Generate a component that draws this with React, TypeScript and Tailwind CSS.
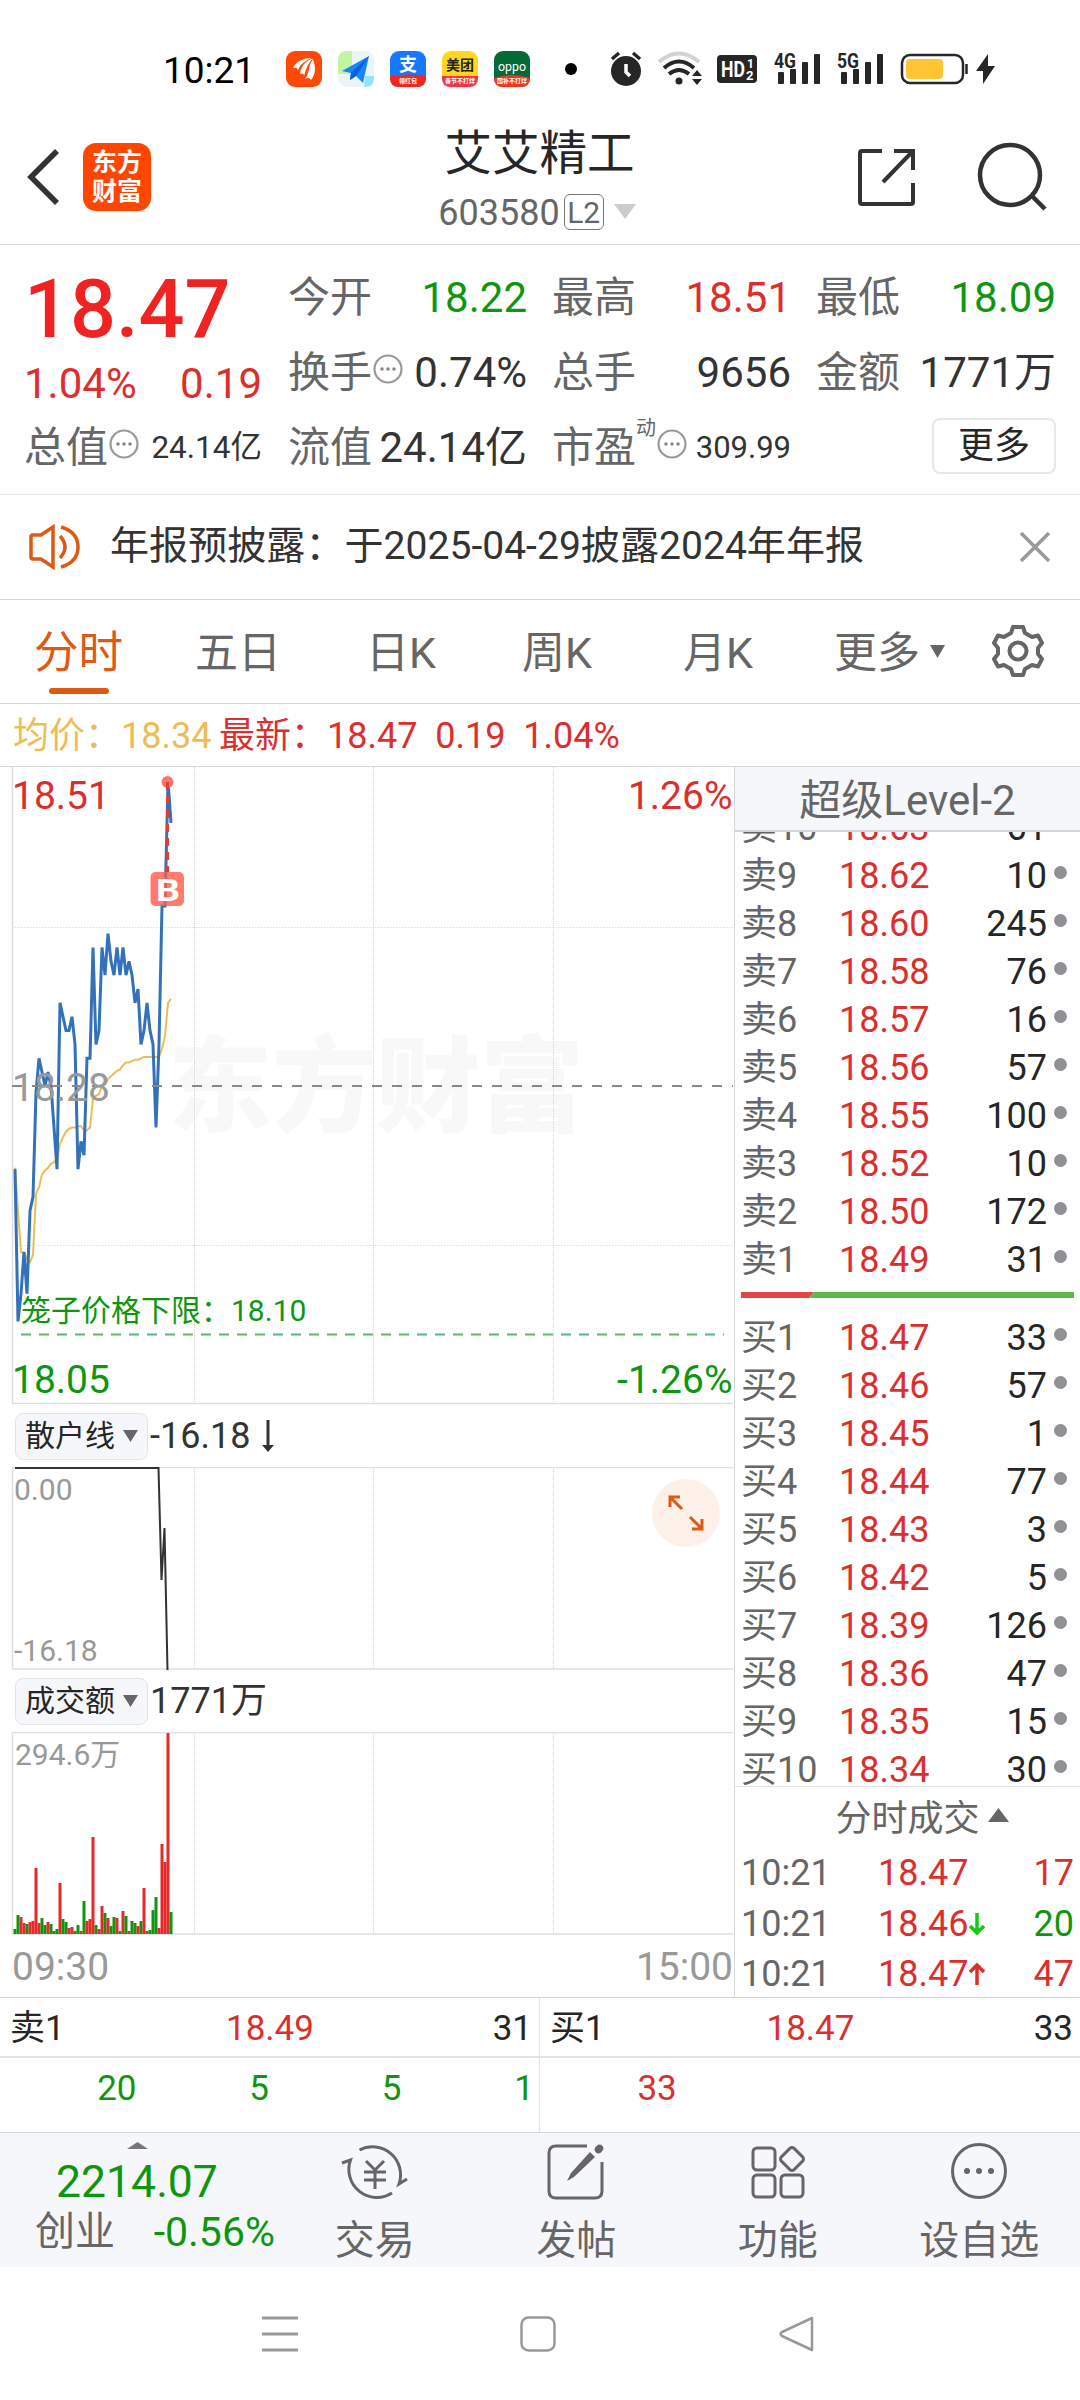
import type { ReactNode } from "react"

type Level = { label: string; price: string; qty: number }

// minute bars: [height in px, direction]
type VolumeBar = [number, "r" | "g"]

const sells: Level[] = [
  { label: "卖10", price: "18.63", qty: 61 },
  { label: "卖9", price: "18.62", qty: 10 },
  { label: "卖8", price: "18.60", qty: 245 },
  { label: "卖7", price: "18.58", qty: 76 },
  { label: "卖6", price: "18.57", qty: 16 },
  { label: "卖5", price: "18.56", qty: 57 },
  { label: "卖4", price: "18.55", qty: 100 },
  { label: "卖3", price: "18.52", qty: 10 },
  { label: "卖2", price: "18.50", qty: 172 },
  { label: "卖1", price: "18.49", qty: 31 },
]

const buys: Level[] = [
  { label: "买1", price: "18.47", qty: 33 },
  { label: "买2", price: "18.46", qty: 57 },
  { label: "买3", price: "18.45", qty: 1 },
  { label: "买4", price: "18.44", qty: 77 },
  { label: "买5", price: "18.43", qty: 3 },
  { label: "买6", price: "18.42", qty: 5 },
  { label: "买7", price: "18.39", qty: 126 },
  { label: "买8", price: "18.36", qty: 47 },
  { label: "买9", price: "18.35", qty: 15 },
  { label: "买10", price: "18.34", qty: 30 },
]

const trades = [
  { time: "10:21", price: "18.47", dir: "", qty: 17, color: "text-[#dc2f2d]" },
  { time: "10:21", price: "18.46", dir: "down", qty: 20, color: "text-[#0f960f]" },
  { time: "10:21", price: "18.47", dir: "up", qty: 47, color: "text-[#dc2f2d]" },
]

// offsets from 18.28, in cents, one per minute
const prices = [
  -6, -17, -15, -12, -15, -9, -8, -0.5, 2, 1, 0, 1, 0, -3, -6, 6, 5, 4, 4, 5, 3,
  -6, -4, -5, 2, 2, 10, 3, 4, 10, 8, 11, 9, 8, 10, 8, 10, 8, 9, 8, 6, 7, 3, 4,
  6, 4, 3, -3, 3, 13, 13, 22, 19,
]

const averages = [
  -5.9, -9, -12, -12, -12.5, -12.7, -12.2, -7.8, -7.3, -6.4, -6.1, -5.9, -5.6,
  -5.5, -5.3, -4.2, -3.7, -3.3, -3.1, -3, -3, -2.9, -2.9, -3.2, -3.2, -3, -0.9,
  -0.7, -0.6, 0, 0.1, 0.5, 0.7, 0.9, 1.1, 1.2, 1.5, 1.7, 1.7, 1.8, 1.9, 1.9, 2,
  2.1, 2.1, 2.1, 2.1, 2.1, 2.1, 2.7, 3.6, 6, 6.3,
]

const volumes: VolumeBar[] = [
  [5, "g"], [19, "g"], [17, "r"], [11, "r"], [10, "g"], [12, "r"], [13, "r"],
  [66, "r"], [11, "r"], [16, "g"], [9, "g"], [12, "r"], [10, "g"], [3, "g"],
  [5, "g"], [51, "r"], [15, "g"], [12, "g"], [6, "r"], [7, "r"], [3, "g"],
  [9, "g"], [3, "r"], [33, "g"], [13, "r"], [15, "r"], [97, "r"], [9, "g"],
  [5, "r"], [28, "r"], [21, "g"], [16, "r"], [8, "g"], [17, "g"], [16, "r"],
  [3, "g"], [23, "r"], [18, "g"], [3, "r"], [13, "g"], [11, "g"], [8, "r"],
  [13, "g"], [46, "r"], [3, "r"], [4, "g"], [24, "g"], [37, "g"], [6, "r"],
  [90, "r"], [72, "r"], [201, "r"], [22, "g"],
]

const toPoints = (data: number[]) =>
  data.map((v, i) => `${15 + i * 3},${319 - v * 13.85}`).join(" ")

function StatusBar() {
  return (
    <div className="flex h-[90px] items-end pl-[163px]">
      <div className="flex h-[42px] items-center">
        <span className="w-[123px] pt-[3px] text-[37px] leading-none text-black">10:21</span>

        {/* app notifications */}
        <div className="flex gap-4">
          <svg width="36" height="36" viewBox="0 0 36 36">
            <rect width="36" height="36" rx="9" fill="#fe4a06" />
            <path d="M7 17C10 10 18 7 26 7Q20 9 17 12Q13 15 12 20C12 17 10 16 7 17Z" fill="#fff" />
            <path d="M14 23C15 15 20 9 27 7.500C22 12 20 18 18 25C18 22 16 22 14 23Z" fill="#fff" />
            <path d="M19 28C24 22 22 14 27 8.500C30 16 30 23 25 29C24 27 22 26 19 28Z" fill="#fff" />
          </svg>
          <svg width="36" height="36" viewBox="0 0 36 36">
            <rect width="36" height="36" rx="9" fill="#eef3f8" />
            <path d="M9 0H14V23H0V9Q0 0 9 0Z" fill="#c2f5a0" />
            <path d="M27 25H36V27Q36 36 27 36H26Z" fill="#8be6ff" />
            <path d="M4 20L31 5L25 32L18 25L12 29L13 22Z" fill="#1785fb" />
            <path d="M31 5L13 22L12 29L18 25Z" fill="#0861d8" />
          </svg>
          <svg width="36" height="36" viewBox="0 0 36 36">
            <rect width="36" height="36" rx="9" fill="#1677ff" />
            <path d="M0 25Q18 22 36 25V27Q36 36 27 36H9Q0 36 0 27Z" fill="#f2271c" />
            <text x="18" y="20" textAnchor="middle" fontSize="18" fontWeight="700" fill="#fff">支</text>
            <text x="18" y="32" textAnchor="middle" fontSize="6" fontWeight="700" fill="#fff">领红包</text>
          </svg>
          <svg width="36" height="36" viewBox="0 0 36 36">
            <rect width="36" height="36" rx="9" fill="#ffd71b" />
            <path d="M0 25H36V27Q36 36 27 36H9Q0 36 0 27Z" fill="#f2334a" />
            <text x="18" y="19" textAnchor="middle" fontSize="14" fontWeight="700" fill="#222">美团</text>
            <text x="18" y="32" textAnchor="middle" fontSize="6" fontWeight="700" fill="#fff">春节不打烊</text>
          </svg>
          <svg width="36" height="36" viewBox="0 0 36 36">
            <rect width="36" height="36" rx="9" fill="#046a38" />
            <path d="M0 27Q18 21 36 27Q36 36 27 36H9Q0 36 0 27Z" fill="#f0351d" />
            <text x="18" y="20" textAnchor="middle" fontSize="12" textLength="28" lengthAdjust="spacingAndGlyphs" fill="#fff">oppo</text>
            <text x="18" y="32" textAnchor="middle" fontSize="6" fontWeight="700" fill="#fff">国补不打烊</text>
          </svg>
        </div>
        <span className="ml-[35px] h-3 w-3 rounded-full bg-black" />

        {/* alarm, wifi, HD */}
        <svg className="ml-[32px]" width="34" height="36" viewBox="0 0 34 36" fill="#262626">
          <circle cx="17" cy="20" r="15" />
          <path d="M3 8L10 2M31 8L24 2" stroke="#262626" strokeWidth="3.5" />
          <path d="M17 13V21L21 25" stroke="#fff" strokeWidth="3.5" fill="none" />
        </svg>
        <svg className="ml-[14px]" width="46" height="36" viewBox="0 0 46 36" fill="none" strokeWidth="4">
          <path d="M2 11Q22 -6 42 11" stroke="#d2d2d2" />
          <path d="M7 17Q22 4 37 17" stroke="#262626" />
          <path d="M12 23Q22 15 32 23" stroke="#262626" />
          <circle cx="22" cy="30" r="3.500" fill="#262626" />
          <path d="M35 25L40 19L45 25ZM35 28L40 34L45 28Z" fill="#262626" />
        </svg>
        <svg className="ml-[14px]" width="40" height="28" viewBox="0 0 40 28">
          <rect width="40" height="28" rx="4" fill="#262626" />
          <text x="4" y="22" fontSize="22" fontWeight="700" textLength="24" lengthAdjust="spacingAndGlyphs" fill="#fff">HD</text>
          <text x="30" y="13" fontSize="12" fontWeight="700" fill="#fff">1</text>
          <text x="29" y="25" fontSize="13" fontWeight="700" fill="#fff">2</text>
        </svg>
        {["4G", "5G"].map((net) => (
          <svg key={net} className="ml-[17px]" width="46" height="34" viewBox="0 0 46 34" fill="#262626">
            <text x="0" y="16" fontSize="21" fontWeight="700" textLength="22" lengthAdjust="spacingAndGlyphs">{net}</text>
            <rect x="4" y="20" width="6" height="12" rx="1" />
            <rect x="16" y="17" width="6" height="15" rx="1" />
            <rect x="28" y="10" width="6" height="22" rx="1" />
            <rect x="40" y="2" width="6" height="30" rx="1" />
          </svg>
        ))}
        <svg className="ml-[17px]" width="96" height="34" viewBox="0 0 96 34">
          <rect x="2" y="3" width="61" height="28" rx="8" fill="none" stroke="#262626" strokeWidth="2.5" />
          <rect x="6" y="7" width="37" height="20" rx="4" fill="#ffc533" />
          <path d="M66.500 12V22" stroke="#262626" strokeWidth="2.5" />
          <path d="M88 2L76 19H83V32L95 14H88Z" fill="#262626" />
        </svg>
      </div>
    </div>
  )
}

function Header() {
  return (
    <div className="flex h-[155px] items-center border-b border-[#d6d6d6]">
      <svg className="mt-5 ml-[26px]" width="36" height="58" viewBox="0 0 36 58" fill="none" stroke="#333" strokeWidth="5.5">
        <path d="M31 3L5 29L31 55" />
      </svg>
      <div className="mt-5 ml-[21px] flex h-[68px] w-[68px] flex-col items-center justify-center rounded-[13px] bg-[#ff4600] text-[25px] leading-[29px] font-bold text-white">
        <span>东方</span>
        <span>财富</span>
      </div>
      <div className="flex flex-1 flex-col items-center pt-[26px] pl-[72px]">
        <h1 className="h-[60px] text-[47.500px] leading-[60px] text-[#262626]">艾艾精工</h1>
        <div className="-ml-[5px] flex h-[52px] items-center pt-1">
          <span className="pt-[2px] text-[36px] leading-none text-[#666]">603580</span>
          <span className="ml-[4px] flex h-9 w-10 items-center justify-center rounded-md border-[1.5px] border-[#777] pt-[2px] text-[30px] leading-none text-[#666]">L2</span>
          <svg className="ml-[10px]" width="22" height="16"><path d="M0 0H22L11 15Z" fill="#ccc" /></svg>
        </div>
      </div>
      <svg className="mt-5 mr-[60px]" width="61" height="61" viewBox="0 0 61 61" fill="none" stroke="#333" strokeWidth="4">
        <path d="M26 4H6Q4 4 4 6V55Q4 57 6 57H55Q57 57 57 55V36M38 4H57V23M57 4L27 35" />
      </svg>
      <svg className="mt-5 mr-[32px]" width="71" height="71" viewBox="0 0 71 71" fill="none" stroke="#333" strokeWidth="4.5">
        <circle cx="33" cy="33" r="30" />
        <path d="M55 54L68 67" />
      </svg>
    </div>
  )
}

function MoreDots() {
  return (
    <svg className="-mt-2 ml-px shrink-0" width="30" height="30" viewBox="0 0 30 30">
      <circle cx="15" cy="15" r="13.500" fill="none" stroke="#999" strokeWidth="2.2" />
      <circle cx="9" cy="15" r="1.800" fill="#888" />
      <circle cx="15" cy="15" r="1.800" fill="#888" />
      <circle cx="21" cy="15" r="1.800" fill="#888" />
    </svg>
  )
}

function Stat({ label, children, className }: { label: string; children?: ReactNode; className: string }) {
  return (
    <div className="flex h-[75px] items-center justify-between">
      <span className="text-[42px] text-[#666]">{label}</span>
      <span className={className}>{children}</span>
    </div>
  )
}

function Quote() {
  return (
    <div className="flex h-[250px] border-b border-[#e4e4e4] pt-[15px] pl-[24px] leading-none">
      <div className="w-[238px]">
        <div className="h-[94px] text-[81px] leading-[99px] font-medium text-[#f02322]">
          <span>18.47</span>
        </div>
        <div className="flex h-[57px] items-center justify-between pt-[2px] text-[42px] text-[#dc2f2d]">
          <span>1.04%</span>
          <span>0.19</span>
        </div>
        <div className="flex h-[73px] items-center">
          <span className="text-[42px] text-[#666]">总值</span>
          <MoreDots />
          <span className="ml-auto text-[31.500px] text-[#333]">24.14亿</span>
        </div>
      </div>
      <div className="ml-[26px] w-[239px]">
        <Stat label="今开" className="text-[42px] text-[#0f960f]">18.22</Stat>
        <div className="flex h-[75px] items-center">
          <span className="text-[42px] text-[#666]">换手</span>
          <MoreDots />
          <span className="ml-auto text-[42px] text-[#333]">0.74%</span>
        </div>
        <Stat label="流值" className="text-[42px] text-[#333]">24.14亿</Stat>
      </div>
      <div className="ml-[25px] w-[239px]">
        <Stat label="最高" className="text-[42px] text-[#dc2f2d]">18.51</Stat>
        <Stat label="总手" className="text-[42px] text-[#333]">9656</Stat>
        <div className="flex h-[75px] items-center">
          <span className="text-[42px] text-[#666]">市盈</span>
          <span className="-mt-10 text-[20px] text-[#666]">动</span>
          <MoreDots />
          <span className="ml-auto text-[31px] text-[#333]">309.99</span>
        </div>
      </div>
      <div className="ml-[25px] w-[240px]">
        <Stat label="最低" className="text-[42px] text-[#0f960f]">18.09</Stat>
        <Stat label="金额" className="text-[42px] text-[#333]">1771万</Stat>
        <div className="flex h-[71px] items-center justify-end">
          <button className="h-14 w-[124px] rounded-lg border-2 border-[#e8e8e8] text-[36px] leading-none text-[#262626]">更多</button>
        </div>
      </div>
    </div>
  )
}

function Notice() {
  return (
    <div className="flex h-[105px] items-center border-b border-[#d6d6d6] pl-[29px]">
      <svg width="53" height="46" viewBox="0 0 53 46" fill="none" stroke="#dc5a14" strokeWidth="3.5">
        <path d="M2 13Q2 11 4 11H12L24 3V43L12 35H4Q2 35 2 33Z" />
        <path d="M31 12Q41 23 31 34M32 3Q49 8 49 23Q49 38 32 43" />
      </svg>
      <span className="ml-[28px] text-[39.100px] leading-none text-[#333]">年报预披露：于2025-04-29披露2024年年报</span>
      <svg className="mr-[29px] ml-auto" width="32" height="32" viewBox="0 0 32 32" stroke="#999" strokeWidth="3.500">
        <path d="M2 2L30 30M30 2L2 30" />
      </svg>
    </div>
  )
}

function Tabs() {
  return (
    <div className="flex h-[104px] items-center border-b border-[#d6d6d6] pt-1 text-[43px] leading-none text-[#666]">
      <div className="relative ml-[34px] w-[161px] text-[44.500px] text-[#dc5a14]">
        <span>分时</span>
        <div className="absolute top-[57px] left-[15px] h-[6px] w-[60px] rounded-full bg-[#dc5a14]" />
      </div>
      <div className="w-[171px]">五日</div>
      <div className="w-[156px]">日K</div>
      <div className="w-[161px]">周K</div>
      <div className="w-[151px]">月K</div>
      <div className="flex w-[157px] items-center">
        更多
        <svg className="-mt-1 ml-[10px]" width="15" height="13"><path d="M0 0H15L7.500 13Z" fill="#666" /></svg>
      </div>
      <svg className="-mt-[6px]" width="54" height="54" viewBox="0 0 54 54" fill="none" stroke="#666" strokeWidth="4" strokeLinejoin="round">
        <path d="M22 3H32L34 9L41 13L47 11.500L51 19L47 24V30L51 35L47 42.500L41 41L34 45L32 51H22L20 45L13 41L7 42.500L3 35L7 30V24L3 19L7 11.500L13 13L20 9Z" />
        <circle cx="27" cy="27" r="8.500" />
      </svg>
    </div>
  )
}

function GridLines({ height }: { height: number }) {
  return (
    <g>
      {[194.5, 373.5, 553.5].map((x) => (
        <path key={x} d={`M${x} 0V${height}`} stroke="#d2d2d2" strokeWidth="1" strokeDasharray="1 1" />
      ))}
      <path d={`M12.500 0V${height}`} stroke="#dedede" strokeWidth="1.5" />
    </g>
  )
}

function PriceChart() {
  return (
    <svg className="block" width="734" height="638" viewBox="0 0 734 638">
      <text x="168" y="357" fontSize="104" fontWeight="900" fill="#f8f8f8" textLength="416">东方财富</text>
      <GridLines height={636} />
      <path d="M12 160.500H733M12 478.500H733" stroke="#dcdcdc" strokeDasharray="1.500 1.500" />
      <path d="M12 636.500H733" stroke="#dedede" strokeWidth="1.5" />
      <polyline points={toPoints(averages)} fill="none" stroke="#edbd55" strokeWidth="2" />
      <polyline points={toPoints(prices)} fill="none" stroke="#3372b9" strokeWidth="3" />
      <path d="M12 319H733" stroke="#888" strokeWidth="2" strokeDasharray="10 10" />
      <path d="M21 567.500H724" stroke="#5fb865" strokeWidth="1.800" strokeDasharray="10 8" />

      {/* buy marker */}
      <circle cx="167.500" cy="15" r="6" fill="#f9766b" />
      <path d="M167.500 15V105" stroke="#dc3f38" strokeWidth="3" strokeDasharray="8 6" />
      <rect x="150.500" y="105" width="33.500" height="34" rx="5" fill="#ff5a4a" fillOpacity="0.8" />
      <text x="156" y="133.500" fontSize="32" fontWeight="700" textLength="24" lengthAdjust="spacingAndGlyphs" fill="#fff">B</text>

      <text x="12" y="42" fontSize="39" fill="#dc2f2d">18.51</text>
      <text x="732.500" y="42" fontSize="39" textAnchor="end" fill="#dc2f2d">1.26%</text>
      <text x="12" y="333.500" fontSize="39" fill="#999">18.28</text>
      <text x="21" y="554" fontSize="30" fill="#0f960f">笼子价格下限：18.10</text>
      <text x="12" y="626" fontSize="39" fill="#0f960f">18.05</text>
      <text x="732.500" y="626" fontSize="39" textAnchor="end" fill="#0f960f">-1.26%</text>
    </svg>
  )
}

function IndicatorRow({ name, children }: { name: string; children: ReactNode }) {
  return (
    <div className="flex h-[62px] items-center pl-[15px] leading-none">
      <div className="flex h-[47px] w-[133px] items-center rounded-lg border border-[#e3e5e9] bg-[#f6f7fa] pl-[9px] text-[30px] text-[#262626]">
        {name}
        <svg className="ml-2" width="15" height="12"><path d="M0 0H15L7.500 12Z" fill="#666" /></svg>
      </div>
      <div className="ml-[2px] flex items-center text-[36px] text-[#333]">{children}</div>
    </div>
  )
}

function Charts() {
  return (
    <div className="relative w-[734px]">
      <PriceChart />
      <IndicatorRow name="散户线">
        -16.18
        <svg className="ml-[12px]" width="12" height="32" viewBox="0 0 12 32">
          <path d="M6 0V27" stroke="#333" strokeWidth="3" />
          <path d="M0 25H12L6 32Z" fill="#333" />
        </svg>
      </IndicatorRow>
      <svg className="block" width="734" height="203" viewBox="0 0 734 203">
        <GridLines height={202} />
        <path d="M12 0.500H733M12 202H733" stroke="#dedede" strokeWidth="1.5" />
        <path d="M15 1H158.500L161.500 113L164.500 61L167.500 203" fill="none" stroke="#333" strokeWidth="2" />
        <text x="14" y="33" fontSize="30" fill="#999">0.00</text>
        <text x="14" y="194" fontSize="30" fill="#999">-16.18</text>
      </svg>
      <div className="absolute top-[712px] left-[652px] flex h-[68px] w-[68px] items-center justify-center rounded-full bg-[#fdf0e8]">
        <svg width="36" height="36" viewBox="0 0 36 36" fill="none" stroke="#dc5a14" strokeWidth="3">
          <path d="M2 12V2H12M2 2L14 14M24 34H34V24M34 34L22 22" />
        </svg>
      </div>
      <IndicatorRow name="成交额">1771万</IndicatorRow>
      <svg className="block" width="734" height="203" viewBox="0 0 734 203">
        <GridLines height={202} />
        <path d="M12 0.500H733M12 202H733" stroke="#dedede" strokeWidth="1.5" />
        <text x="15" y="33" fontSize="30" fill="#999">294.6万</text>
        {volumes.map(([h, dir], i) => (
          <rect key={i} x={13.5 + i * 3} y={202 - h} width="3" height={h} fill={dir === "r" ? "#e62a29" : "#0f960f"} />
        ))}
      </svg>
      <div className="flex h-[62px] items-center justify-between pt-[3px] pr-px pl-[12px] text-[39px] leading-none text-[#999]">
        <span>09:30</span>
        <span>15:00</span>
      </div>
    </div>
  )
}

function LevelRow({ level }: { level: Level }) {
  return (
    <div className="flex h-12 items-center pl-[6px] text-[36px] leading-none">
      <span className="w-[98px] text-[#666]">{level.label}</span>
      <span className="w-[120px] text-[#dc2f2d]">{level.price}</span>
      <span className="w-[88px] text-right text-[#262626]">{level.qty}</span>
      <span className="-mt-2 ml-[7px] h-[13px] w-[13px] rounded-full bg-[#909095]" />
    </div>
  )
}

function OrderBook() {
  return (
    <div className="w-[346px] border-l border-[#d6d8dc]">
      <div className="flex h-[65px] items-center justify-center border-b-2 border-[#d2d5da] bg-[#f6f7fa] pt-[5px] text-[42px] leading-none text-[#666]">
        超级Level-2
      </div>

      {/* list is scrolled, so the first row is cut by the header */}
      <div className="flex h-[955px] flex-col overflow-hidden border-b border-[#e4e4e4]">
        <div className="-mt-[28px] shrink-0">
          {sells.map((l) => (
            <LevelRow key={l.label} level={l} />
          ))}
        </div>
        <div className="flex h-[30px] shrink-0 items-start pt-[8px] pl-[6px]">
          <svg width="333" height="6">
            <path d="M0 0H73L68 6H0Z" fill="#e64545" />
            <path d="M73 0H333V6H68Z" fill="#5cb84a" />
          </svg>
        </div>
        <div className="shrink-0">
          {buys.map((l) => (
            <LevelRow key={l.label} level={l} />
          ))}
        </div>
      </div>

      <div className="flex h-[61px] items-center justify-center pt-[2px] pl-[29px] text-[36px] leading-none text-[#666]">
        分时成交
        <svg className="-mt-2 ml-[8px]" width="21" height="14"><path d="M0 14L10.500 0L21 14Z" fill="#666" /></svg>
      </div>
      {trades.map((t, i) => (
        <div key={i} className="flex h-[50.500px] items-center pr-[6px] pl-[6px] text-[36px] leading-none">
          <span className="w-[137px] text-[#666]">{t.time}</span>
          <span className="text-[#dc2f2d]">{t.price}</span>
          {t.dir === "down" && (
            <svg width="18" height="24" viewBox="0 0 18 24" fill="none" stroke="#12cc12" strokeWidth="3.500">
              <path d="M9 1V21M2 14L9 21L16 14" />
            </svg>
          )}
          {t.dir === "up" && (
            <svg width="18" height="24" viewBox="0 0 18 24" fill="none" stroke="#dc2f2d" strokeWidth="3.500">
              <path d="M9 23V3M2 10L9 3L16 10" />
            </svg>
          )}
          <span className={`ml-auto ${t.color}`}>{t.qty}</span>
        </div>
      ))}
    </div>
  )
}

function BestQuote({ label, price, qty }: { label: string; price: string; qty: number }) {
  return (
    <div className="flex h-[60px] items-center justify-between border-b-2 border-[#e0e2e4] pt-[3px] pr-[7px] pl-[10px]">
      <span className="w-[110px] text-[#262626]">{label}</span>
      <span className="text-[#dc2f2d]">{price}</span>
      <span className="w-[112px] text-right text-[#262626]">{qty}</span>
    </div>
  )
}

function QueueStrip() {
  return (
    <div className="flex h-[136px] border-y border-[#d2d5da] text-[35px] leading-none">
      <div className="w-[540px] border-r border-[#dfe1e4]">
        <BestQuote label="卖1" price="18.49" qty={31} />
        <div className="grid h-[61px] grid-cols-4 items-center pr-[5px] pl-[4px] text-right text-[#0f960f]">
          <span>20</span>
          <span>5</span>
          <span>5</span>
          <span>1</span>
        </div>
      </div>
      <div className="w-[540px]">
        <BestQuote label="买1" price="18.47" qty={33} />
        <div className="grid h-[61px] grid-cols-4 items-center pr-[5px] pl-[4px] text-right text-[#dc2f2d]">
          <span>33</span>
        </div>
      </div>
    </div>
  )
}

function NavItem({ label, children }: { label: string; children: ReactNode }) {
  return (
    <div className="flex flex-1 flex-col items-center pt-[5px]">
      <svg width="68" height="68" viewBox="0 0 68 68" fill="none" stroke="#666" strokeWidth="3">
        {children}
      </svg>
      <span className="mt-[15px] text-[40px] leading-none text-[#666]">{label}</span>
    </div>
  )
}

function BottomBar() {
  return (
    <div className="flex h-[134px] bg-[#f6f7fa]">
      <div className="flex w-[274px] flex-col items-center pt-[9px] leading-none text-[#0f960f]">
        <svg width="21" height="7"><path d="M0 7L10.500 0L21 7Z" fill="#777" /></svg>
        <span className="mt-[11px] text-[44.500px]">2214.07</span>
        <div className="mt-[7px] flex w-[240px] items-center justify-between">
          <span className="ml-[18px] text-[40px] text-[#666]">创业</span>
          <span className="-mr-[18px] text-[41px]">-0.56%</span>
        </div>
      </div>
      <NavItem label="交易">
        <path d="M18.500 12A28 28 0 0 1 58 46L66 41M51 55A28 28 0 0 1 9.500 22L1 25" />
        <path d="M25 23L34 32L43 23M34 32V51M23 34H45M23 42H45" />
      </NavItem>
      <NavItem label="发帖">
        <path d="M45 8H14Q7 8 7 15V53Q7 60 14 60H53Q60 60 60 53V24" />
        <path d="M56.500 11.500L57.500 10.500" strokeWidth="7.500" strokeLinecap="round" />
        <path d="M48 14L53 19L32 39L25 43L29 35Z" fill="#666" stroke="none" />
      </NavItem>
      <NavItem label="功能">
        <rect x="9" y="10" width="22" height="22" rx="4" />
        <rect x="9" y="37" width="22" height="22" rx="4" />
        <rect x="37" y="37" width="22" height="22" rx="4" />
        <rect x="39" y="12" width="18" height="18" rx="3" transform="rotate(45 48 21)" />
      </NavItem>
      <NavItem label="设自选">
        <circle cx="34" cy="33" r="26.500" />
        <g fill="#666" stroke="none">
          <circle cx="22" cy="33" r="3" />
          <circle cx="34" cy="33" r="3" />
          <circle cx="46" cy="33" r="3" />
        </g>
      </NavItem>
    </div>
  )
}

function SystemNav() {
  return (
    <div className="flex h-[133px] items-center pl-[262px]">
      <svg width="36" height="36" viewBox="0 0 36 36" stroke="#999" strokeWidth="3">
        <path d="M0 2H36M0 18H36M0 34H36" />
      </svg>
      <svg className="ml-[222px]" width="36" height="36" viewBox="0 0 36 36" fill="none" stroke="#999" strokeWidth="2.5">
        <rect x="1.500" y="1.500" width="33" height="33" rx="7" />
      </svg>
      <svg className="ml-[222px]" width="36" height="36" viewBox="0 0 36 36" fill="none" stroke="#999" strokeWidth="2.5" strokeLinejoin="round">
        <path d="M34 2V34L4 20Q1 18 4 16Z" />
      </svg>
    </div>
  )
}

export default function App() {
  return (
    <div className="h-[2400px] w-[1080px] overflow-hidden bg-white font-['Roboto','Noto_Sans_CJK_SC',sans-serif]">
      <StatusBar />
      <Header />
      <Quote />
      <Notice />
      <Tabs />
      <div className="flex h-[63px] items-center border-b border-[#d6d6d6] pt-[2px] pl-[13px] text-[36px] leading-none whitespace-pre">
        <span className="w-[206px] text-[#edbd55]">均价：18.34</span>
        <span className="w-[108px] text-[#dc2f2d]">最新：</span>
        <span className="text-[#dc2f2d]">18.47  0.19  1.04%</span>
      </div>
      <div className="flex h-[1230px]">
        <Charts />
        <OrderBook />
      </div>
      <QueueStrip />
      <BottomBar />
      <SystemNav />
    </div>
  )
}
